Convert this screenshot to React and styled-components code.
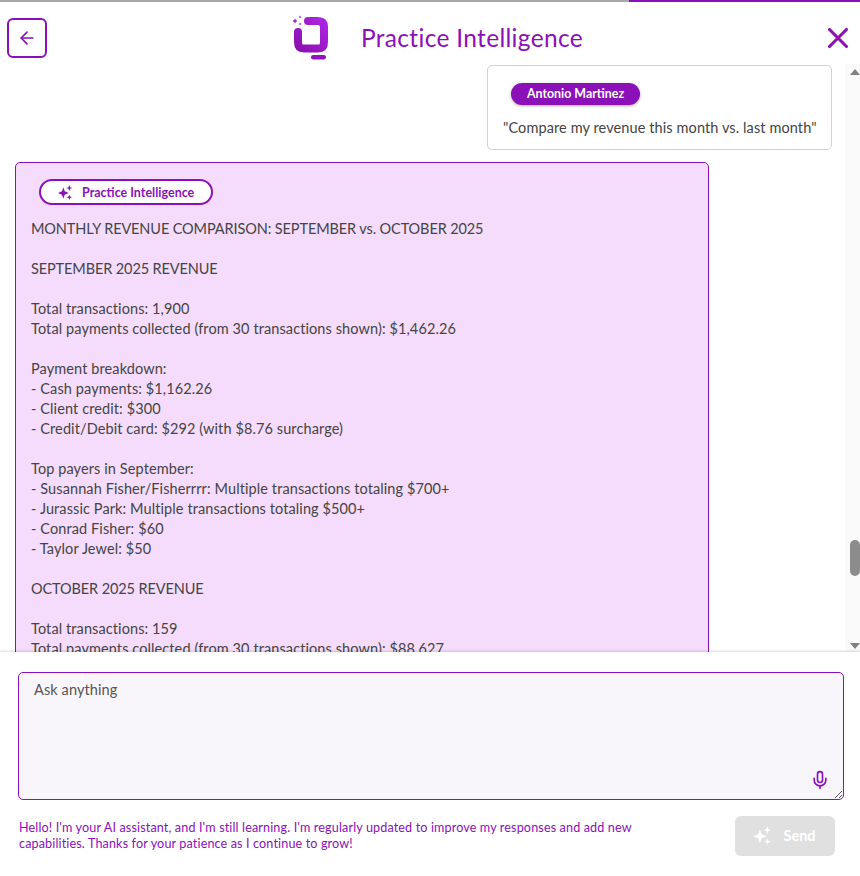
import React from "react";
import styled, { createGlobalStyle } from "styled-components";
import { ArrowLeft, X, Mic } from "lucide-react";

const FONT = `"Lato", "Open Sans", "Liberation Sans", sans-serif`;
const PURPLE = "#8c10b8";

const Global = createGlobalStyle`
  html, body { margin: 0; padding: 0; background: #fff; }
  body { font-family: ${FONT}; color: #444; }
  * { box-sizing: border-box; }
`;

const Page = styled.div`
  width: 860px; height: 876px; display: flex; flex-direction: column; overflow: hidden; background: #fff;
`;
const Progress = styled.div`
  height: 2px; flex: none; background: linear-gradient(to right, #a8a8a8 629px, ${PURPLE} 629px);
`;
const Header = styled.header`
  height: 62px; flex: none; display: flex; align-items: center; justify-content: space-between; padding: 0 5px 0 7px;
`;
const BackButton = styled.button`
  width: 40px; height: 40px; margin-top: 10px; padding: 0; background: #fff; border: 2px solid ${PURPLE}; border-radius: 6px;
  color: ${PURPLE}; display: flex; align-items: center; justify-content: center;
`;
const Brand = styled.div`
  display: flex; align-items: center; gap: 33px; margin: 8px 0 0 5px;
`;
const Title = styled.h1`
  margin: 0; font-size: 24.5px; font-weight: 400; color: ${PURPLE}; letter-spacing: 0.32px;
`;
const CloseButton = styled.button`
  padding: 0; border: 0; background: none; color: ${PURPLE}; display: flex; margin-top: 10px;
`;
const Body = styled.div`
  flex: none; height: 588px; display: flex; overflow: hidden;
`;
const Messages = styled.div`
  flex: 1; min-width: 0; padding: 1px 13px 0 15px; display: flex; flex-direction: column; gap: 12px; overflow: hidden;
`;
const UserBubble = styled.div`
  flex: none; align-self: flex-end; width: 345px; height: 85px; background: #fff; border: 1px solid #d0d0d0; border-radius: 5px;
  padding: 16px 0 0 23px;
`;
const NameChip = styled.div`
  display: inline-flex; align-items: center; justify-content: center; height: 22px; width: 129px; border-radius: 11px;
  background: ${PURPLE}; color: #fff; font-size: 12.4px; font-weight: 700; box-shadow: 0 1px 3px rgba(0,0,0,.35);
`;
const Quote = styled.p`
  margin: 13px 0 0 -8px; font-size: 14.5px; letter-spacing: 0.1px; line-height: 20px; color: #444; white-space: nowrap;
`;
const AiCard = styled.article`
  flex: none; width: 694px; background: #f5dcfd; border: 1px solid ${PURPLE}; border-radius: 5px; padding: 16px 15px 20px;
`;
const AiChip = styled.div`
  display: inline-flex; align-items: center; gap: 9px; height: 26px; width: 174px; margin-left: 8px; padding-left: 16px;
  background: #fff; border: 2px solid ${PURPLE}; border-radius: 13px; color: ${PURPLE}; font-size: 12.5px; font-weight: 700;
`;
const Answer = styled.div`
  margin: 14px 0 0; font-size: 14.5px; letter-spacing: 0.1px; line-height: 20px; color: #444;
`;
const Line = styled.div`
  min-height: 20px; white-space: pre-wrap;
  ${(p) => p.$caps && "letter-spacing: -0.11px;"}
`;
const ScrollBar = styled.div`
  flex: none; width: 15px; background: #fafafa; display: flex; flex-direction: column; align-items: center; justify-content: space-between;
  padding: 5px 0 3px 5px; position: relative;
`;
const Thumb = styled.div`
  position: absolute; left: 5px; top: 476px; width: 10px; height: 36px; border-radius: 5px; background: #8c8c8c;
`;
const Arrow = styled.div`
  width: 0; height: 0; border-left: 5px solid transparent; border-right: 5px solid transparent;
  ${(p) => (p.$down ? "border-top: 6px solid #808080;" : "border-bottom: 6px solid #808080;")}
`;
const Footer = styled.footer`
  flex: 1; background: #fff; padding: 20px 16px 0 18px; box-shadow: 0 -1px 2px rgba(0,0,0,.15); position: relative;
  display: flex; flex-direction: column;
`;
const InputBox = styled.div`
  height: 128px; width: 826px; background: #f9f6fb; border: 1.5px solid ${PURPLE}; border-radius: 5px; padding: 8px 15px; position: relative;
  font-size: 14.5px; letter-spacing: 0.1px; line-height: 18px; color: #555;
`;
const MicIcon = styled(Mic)`
  position: absolute; right: 13px; bottom: 9px; color: ${PURPLE};
`;
const Grip = styled.svg`
  position: absolute; right: 0; bottom: 0;
`;
const Bottom = styled.div`
  display: flex; justify-content: space-between; padding: 16px 9px 0 1px; align-items: flex-start;
`;
const Disclaimer = styled.p`
  margin: 4px 0 0; width: 640px; font-size: 12.6px; letter-spacing: 0.13px; line-height: 16px; color: ${PURPLE};
`;
const SendButton = styled.button`
  width: 100px; height: 40px; border: 0; border-radius: 6px; background: #e0e0e0; color: #fff; font-family: ${FONT};
  font-size: 14.5px; font-weight: 700; display: flex; align-items: center; justify-content: center; gap: 11px; padding: 0 2px 2px 0;
`;

const Sparkle = ({ size = 16, color = "currentColor" }) => (
  <svg width={size} height={size} viewBox="0 0 24 24" fill={color}>
    <path d="M9.5 5 L11.5 11 L17.5 13.5 L11.5 16 L9.5 22 L7.5 16 L1.5 13.5 L7.5 11 Z" />
    <path d="M18.5 1.5 L19.7 4.8 L23 6 L19.7 7.2 L18.5 10.5 L17.3 7.2 L14 6 L17.3 4.8 Z" />
    <path d="M18.5 16 L19.6 18.9 L22.5 20 L19.6 21.1 L18.5 24 L17.4 21.1 L14.5 20 L17.4 18.9 Z" />
  </svg>
);

const Logo = () => (
  <svg width="38" height="46" viewBox="0 0 38 46" fill="none">
    <defs>
      <linearGradient id="lg" x1="1" y1="0" x2="0" y2="1">
        <stop offset="0" stopColor="#ab25e0" />
        <stop offset="1" stopColor="#8c10b0" />
      </linearGradient>
    </defs>
    <path d="M8 18 V28 Q8 34.5 14 34.5 H28 Q34 34.5 34 28 V13 Q34 7 28 7 H18" stroke="url(#lg)" strokeWidth="8" strokeLinecap="round" />
    <rect x="21" y="41" width="15" height="4.5" rx="2.2" fill="#9214bd" />
    <path d="M5 4.5 L5.9 6.1 L7.5 7 L5.9 7.9 L5 9.5 L4.1 7.9 L2.5 7 L4.1 6.1 Z M10 1.5 L10.5 2.5 L11.5 3 L10.5 3.5 L10 4.5 L9.5 3.5 L8.5 3 L9.5 2.5 Z M10 8.5 L10.5 9.5 L11.5 10 L10.5 10.5 L10 11.5 L9.5 10.5 L8.5 10 L9.5 9.5 Z" fill="#a520d8" />
  </svg>
);

const ANSWER = [
  "MONTHLY REVENUE COMPARISON: SEPTEMBER vs. OCTOBER 2025",
  "",
  "SEPTEMBER 2025 REVENUE",
  "",
  "Total transactions: 1,900",
  "Total payments collected (from 30 transactions shown): $1,462.26",
  "",
  "Payment breakdown:",
  "- Cash payments: $1,162.26",
  "- Client credit: $300",
  "- Credit/Debit card: $292 (with $8.76 surcharge)",
  "",
  "Top payers in September:",
  "- Susannah Fisher/Fisherrrr: Multiple transactions totaling $700+",
  "- Jurassic Park: Multiple transactions totaling $500+",
  "- Conrad Fisher: $60",
  "- Taylor Jewel: $50",
  "",
  "OCTOBER 2025 REVENUE",
  "",
  "Total transactions: 159",
  "Total payments collected (from 30 transactions shown): $88,627",
];

export default function App() {
  return (
    <Page>
      <Global />
      <Progress />
      <Header>
        <BackButton aria-label="Back"><ArrowLeft size={20} strokeWidth={2} /></BackButton>
        <Brand>
          <Logo />
          <Title>Practice Intelligence</Title>
        </Brand>
        <CloseButton aria-label="Close"><X size={34} strokeWidth={2.2} /></CloseButton>
      </Header>
      <Body>
        <Messages>
          <UserBubble>
            <NameChip>Antonio Martinez</NameChip>
            <Quote>"Compare my revenue this month vs. last month"</Quote>
          </UserBubble>
          <AiCard>
            <AiChip><Sparkle size={16} />Practice Intelligence</AiChip>
            <Answer>
              {ANSWER.map((text, i) => (
                <Line key={i} $caps={/^[A-Z]{4,}/.test(text)}>{text}</Line>
              ))}
            </Answer>
          </AiCard>
        </Messages>
        <ScrollBar>
          <Arrow />
          <Thumb />
          <Arrow $down />
        </ScrollBar>
      </Body>
      <Footer>
        <InputBox>
          Ask anything
          <MicIcon size={20} strokeWidth={2} />
          <Grip width="9" height="9" viewBox="0 0 9 9" stroke="#555" strokeWidth="1">
            <path d="M1 8 L8 1 M5 8 L8 5" />
          </Grip>
        </InputBox>
        <Bottom>
          <Disclaimer>Hello! I'm your AI assistant, and I'm still learning. I'm regularly updated to improve my responses and add new capabilities. Thanks for your patience as I continue to grow!</Disclaimer>
          <SendButton><Sparkle size={20} />Send</SendButton>
        </Bottom>
      </Footer>
    </Page>
  );
}
